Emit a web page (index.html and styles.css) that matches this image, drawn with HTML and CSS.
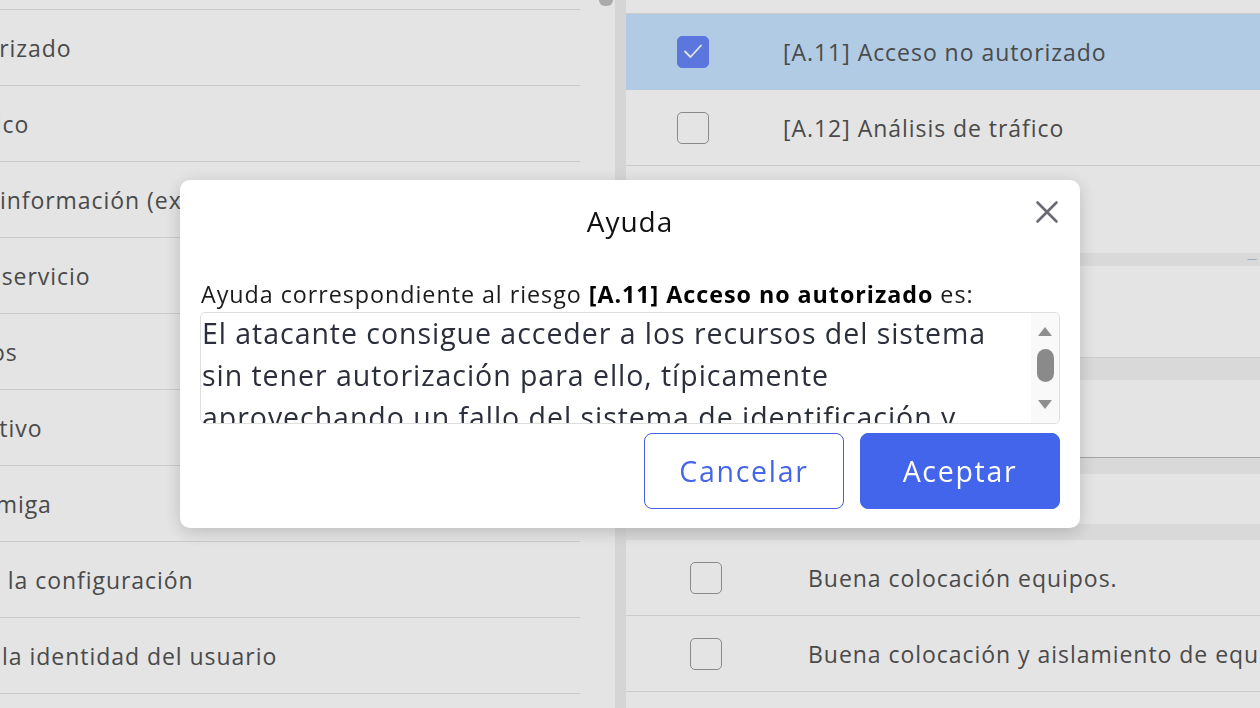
FILE: index.html
```html
<!DOCTYPE html>
<html lang="es">
<head>
    <meta charset="UTF-8">
    <meta name="viewport" content="width=device-width, initial-scale=1.0">
    <title>Riesgos - Ayuda</title>
    <link rel="stylesheet" href="styles.css">
</head>
<body>
    <div class="page">
        <aside class="left-pane">
            <div class="left-scroll">
                <ul class="left-list">
                    <li>[A.7] Uso no previsto</li>
                    <li>[A.11] Acceso no autorizado</li>
                    <li>[A.12] Análisis de tráfico</li>
                    <li>[A.19] Divulgación de información (externa)</li>
                    <li>[A.24] Denegación de servicio</li>
                    <li>[A.25] Robo de equipos</li>
                    <li>[A.26] Ataque destructivo</li>
                    <li>[A.27] Ocupación enemiga</li>
                    <li>[A.4] Manipulación de la configuración</li>
                    <li>[A.5] Suplantación de la identidad del usuario</li>
                </ul>
            </div>
            <div class="scroll-track"><div class="scroll-thumb"></div></div>
        </aside>

        <div class="divider"></div>

        <main class="right-pane">
            <div class="row row-cut"></div>
            <div class="row threat selected">
                <span class="check checked">
                    <svg viewBox="0 0 32 32" width="32" height="32"><polyline points="8,16.5 13.5,22 24,10.5" fill="none" stroke="#fff" stroke-width="1.8" stroke-linecap="round" stroke-linejoin="round"/></svg>
                </span>
                <span class="label">[A.11] Acceso no autorizado</span>
            </div>
            <div class="row threat">
                <span class="check"></span>
                <span class="label">[A.12] Análisis de tráfico</span>
            </div>
            <div class="block block-a"></div>
            <div class="band band-a"><span class="band-note">&mdash;</span></div>
            <div class="block block-b"></div>
            <div class="band band-b"></div>
            <div class="block block-c"></div>
            <div class="band band-c"></div>
            <div class="block block-d"></div>
            <div class="band band-c"></div>
            <div class="row safeguard">
                <span class="check"></span>
                <span class="label">Buena colocación equipos.</span>
            </div>
            <div class="row safeguard">
                <span class="check"></span>
                <span class="label">Buena colocación y aislamiento de equipos críticos.</span>
            </div>
            <div class="row safeguard">
                <span class="check"></span>
                <span class="label">Control de acceso físico.</span>
            </div>
        </main>
    </div>

    <div class="overlay">
        <div class="modal">
            <div class="modal-head">
                <h2>Ayuda</h2>
                <button class="close" aria-label="Cerrar">
                    <svg viewBox="0 0 24 24" width="24" height="24"><path d="M2.5 2.5 L21.5 21.5 M21.5 2.5 L2.5 21.5" stroke="#6a6a74" stroke-width="2.6" stroke-linecap="round"/></svg>
                </button>
            </div>
            <p class="help-intro">Ayuda correspondiente al riesgo <b>[A.11] Acceso no autorizado</b> es:</p>
            <div class="help-box">
                <div class="help-text">El atacante consigue acceder a los recursos del sistema sin tener autorización para ello, típicamente aprovechando un fallo del sistema de identificación y autorización.</div>
                <div class="help-scroll">
                    <span class="arrow-up"></span>
                    <span class="help-thumb"></span>
                    <span class="arrow-down"></span>
                </div>
            </div>
            <div class="actions">
                <button class="btn btn-outline">Cancelar</button>
                <button class="btn btn-primary">Aceptar</button>
            </div>
        </div>
    </div>
</body>
</html>
```

FILE: styles.css
```css
body {
    margin: 0;
    height: 708px;
    overflow: hidden;
    font-family: "Open Sans", "Noto Sans", sans-serif;
    letter-spacing: 0.06em;
    background: #fff;
    color: #535353;
}
.page {
    display: flex;
    height: 708px;
}

/* left list (scrolled horizontally) */
.left-pane {
    display: flex;
    width: 615px;
    flex-shrink: 0;
}
.left-scroll {
    width: 596px;
    overflow: hidden;
}
.left-list {
    list-style: none;
    margin: -66px 0 0 -252px;
    padding: 0;
    width: 832px;
}
.left-list li {
    height: 76px;
    box-sizing: border-box;
    border-bottom: 1px solid #e4e4e4;
    display: flex;
    align-items: center;
    font-size: 23px;
    white-space: nowrap;
}
.scroll-track {
    width: 19px;
    display: flex;
    justify-content: center;
}
.scroll-thumb {
    width: 14px;
    height: 6px;
    background: #bdbdbd;
    border-radius: 0 0 7px 7px;
}
.divider {
    width: 11px;
    flex-shrink: 0;
    background: #efefef;
}

/* right list */
.right-pane {
    flex: 1;
    overflow: hidden;
}
.row {
    height: 76px;
    box-sizing: border-box;
    border-bottom: 1px solid #e4e4e4;
    display: flex;
    align-items: center;
    font-size: 23px;
    white-space: nowrap;
}
.row-cut {
    height: 14px;
}
.threat {
    padding-left: 51px;
}
.threat .check {
    margin-right: 74px;
}
.selected {
    background: #c5e4fe;
    border-bottom-color: #c5e4fe;
}
.safeguard {
    padding-left: 64px;
}
.safeguard .check {
    margin-right: 86px;
}
.check {
    width: 32px;
    height: 32px;
    box-sizing: border-box;
    border: 1.5px solid #9b9b9b;
    border-radius: 5px;
    flex-shrink: 0;
    background: #fff;
}
.check.checked {
    background: #6686f9;
    border-color: #6686f9;
}
.check svg {
    display: block;
    margin: -1.5px;
}
.block-a { height: 87px; }
.block-b { height: 91px; border-bottom: 1px solid #e4e4e4; }
.block-c { height: 77px; border-bottom: 1px solid #b9b9b9; }
.block-d { height: 50px; }
.band {
    background: #f3f3f3;
    position: relative;
}
.band-a { height: 13px; }
.band-b { height: 22px; }
.band-c { height: 16px; }
.band-note {
    position: absolute;
    right: 2px;
    top: -2px;
    font-size: 10px;
    color: #a9c3de;
}

/* help dialog */
.overlay {
    position: fixed;
    inset: 0;
    background: rgba(0, 0, 0, 0.106);
    display: flex;
    align-items: center;
    justify-content: center;
}
.modal {
    width: 900px;
    box-sizing: border-box;
    padding: 20px 20px 19px;
    background: #fff;
    border-radius: 10px;
    box-shadow: 0 4px 18px rgba(0, 0, 0, 0.18);
}
.modal-head {
    position: relative;
    height: 42px;
    display: flex;
    justify-content: center;
    align-items: center;
}
.modal-head h2 {
    margin: 0;
    font-size: 28px;
    font-weight: 500;
    line-height: 42px;
    color: #111;
}
.close {
    position: absolute;
    right: 1px;
    top: 0;
    width: 24px;
    height: 24px;
    padding: 0;
    border: none;
    background: none;
}
.close svg {
    display: block;
}
.help-intro {
    margin: 38px 0 0 1px;
    font-size: 23.3px;
    line-height: 28px;
    color: #1b1b1b;
    white-space: nowrap;
}
.help-intro b {
    font-weight: 700;
    color: #000;
}
.help-box {
    margin-top: 4px;
    height: 112px;
    box-sizing: border-box;
    border: 1px solid #dedede;
    border-radius: 5px;
    display: flex;
}
.help-text {
    flex: 1;
    overflow: hidden;
    font-size: 28.5px;
    line-height: 42px;
    margin-top: -1px;
    padding-left: 1px;
    color: #2b2f3b;
}
.help-scroll {
    width: 28px;
    background: #f9f9f9;
    border-radius: 0 5px 5px 0;
    display: flex;
    flex-direction: column;
    align-items: center;
    padding-top: 14px;
    box-sizing: border-box;
}
.arrow-up {
    width: 0;
    height: 0;
    border-left: 7px solid transparent;
    border-right: 7px solid transparent;
    border-bottom: 9px solid #8e8e8e;
}
.help-thumb {
    width: 17px;
    height: 33px;
    margin: 13px 0 18px;
    border-radius: 9px;
    background: #8a8a8a;
}
.arrow-down {
    width: 0;
    height: 0;
    border-left: 7px solid transparent;
    border-right: 7px solid transparent;
    border-top: 9px solid #8e8e8e;
}
.actions {
    margin-top: 9px;
    display: flex;
    justify-content: flex-end;
    gap: 16px;
}
.btn {
    width: 200px;
    height: 76px;
    border-radius: 8px;
    font-family: inherit;
    font-size: 28.5px;
    letter-spacing: 0.06em;
    border: 1.5px solid #4262e0;
    cursor: pointer;
}
.btn-outline {
    background: #fff;
    color: #4566e8;
}
.btn-primary {
    background: #4365ec;
    border-color: #4365ec;
    color: #fff;
}
```
